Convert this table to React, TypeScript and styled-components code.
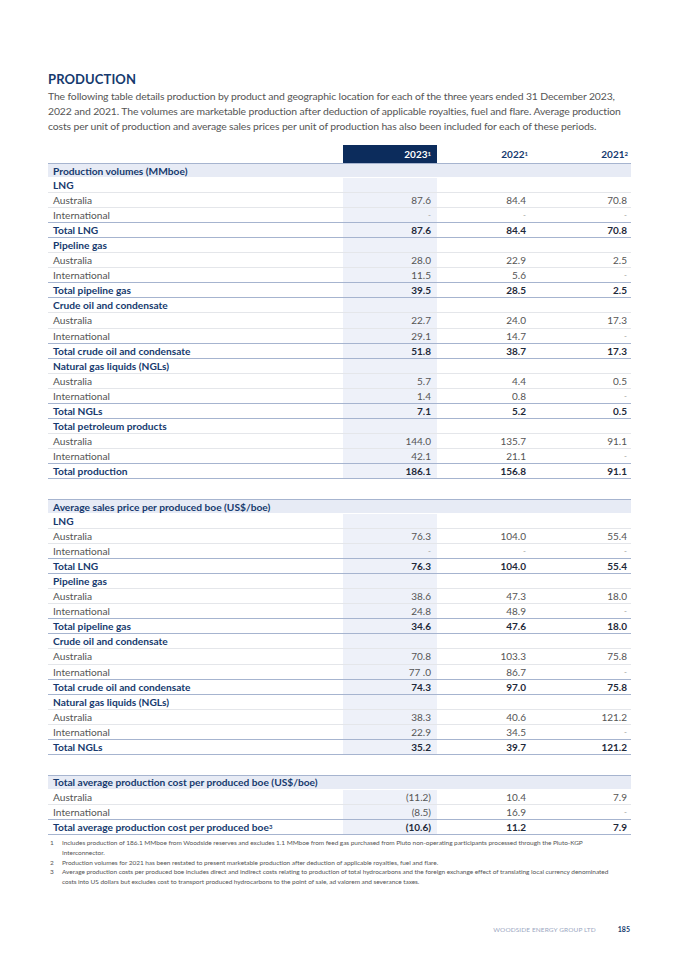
import React from "react";
import styled, { createGlobalStyle } from "styled-components";

const Global = createGlobalStyle`
  html, body { margin: 0; padding: 0; background: #fff; }
  body { font-family: Lato, "Liberation Sans", sans-serif; }
`;

const NAVY = "#163a6e";
const DARK = "#0c2c5c";
const SHADE = "#eef1f9";
const SECTION = "#e7ebf5";
const BLUE_LINE = "#a6b4cf";
const GRAY_LINE = "#e4e6ea";
const TEXT = "#555";

const Page = styled.div`
  width: 679px;
  min-height: 960px;
  box-sizing: border-box;
  padding: 71px 48px 24px 48px;
  display: flex;
  flex-direction: column;
`;

const Title = styled.h1`
  margin: 0;
  font-size: 13px;
  line-height: 16px;
  font-weight: 700;
  color: ${NAVY};
  letter-spacing: 0.1px;
`;

const Intro = styled.p`
  margin: 2px 0 11px 0;
  font-size: 10.4px;
  line-height: 15px;
  color: ${TEXT};
  font-weight: 400;
  letter-spacing: -0.12px;
`;

const Table = styled.div`
  display: flex;
  flex-direction: column;
`;

const cols = "295px 94px 94px 100px";

const HeadRow = styled.div`
  display: grid;
  grid-template-columns: ${cols};
  height: 18px;
`;

const HeadCell = styled.div<{ $dark?: boolean; $pad: number }>`
  display: flex;
  align-items: center;
  justify-content: flex-end;
  padding-right: ${(p) => p.$pad}px;
  font-size: 10px;
  font-weight: 700;
  color: ${(p) => (p.$dark ? "#fff" : NAVY)};
  background: ${(p) => (p.$dark ? DARK : "transparent")};
`;

const Sup = styled.sup`
  font-size: 6px;
  line-height: 0;
  vertical-align: 4px;
  margin-left: 0;
`;

type Kind = "section" | "sub" | "item" | "total";

const Row = styled.div<{ $kind: Kind; $blueBottom: boolean; $gap?: boolean }>`
  display: grid;
  grid-template-columns: ${cols};
  height: 15.06px;
  box-sizing: border-box;
  margin-top: ${(p) => (p.$gap ? "20px" : "0")};
  background: ${(p) => (p.$kind === "section" ? SECTION : "transparent")};
  border-top: ${(p) => (p.$kind === "section" ? `1px solid ${BLUE_LINE}` : "none")};
  border-bottom: 1px solid
    ${(p) => (p.$blueBottom ? BLUE_LINE : p.$kind === "section" ? "#fff" : GRAY_LINE)};
`;

const Label = styled.div<{ $kind: Kind }>`
  display: flex;
  align-items: center;
  padding-left: 5px;
  font-size: 10.2px;
  white-space: nowrap;
  font-weight: ${(p) => (p.$kind === "item" ? 400 : 700)};
  color: ${(p) => (p.$kind === "item" ? TEXT : NAVY)};
`;

const Value = styled.div<{ $kind: Kind; $shade?: boolean; $pad: number }>`
  display: flex;
  align-items: center;
  justify-content: flex-end;
  padding-right: ${(p) => p.$pad}px;
  font-size: 10px;
  font-weight: ${(p) => (p.$kind === "total" ? 700 : 400)};
  color: ${(p) => (p.$kind === "total" ? "#1f2a3a" : TEXT)};
  background: ${(p) => (p.$shade && p.$kind !== "section" ? SHADE : "transparent")};
`;

const Dash = styled.span`
  color: #9a9a9a;
  font-size: 8px;
`;

const Notes = styled.ol`
  list-style: none;
  margin: 3px 0 0 0;
  padding: 0 0 0 2px;
  display: flex;
  flex-direction: column;
`;

const Note = styled.li`
  display: flex;
  font-size: 6.5px;
  line-height: 9.8px;
  color: ${TEXT};
`;

const NoteNum = styled.span`
  flex: 0 0 12px;
`;

const NoteText = styled.span`
  flex: 1;
  padding-right: 10px;
  letter-spacing: -0.05px;
`;

const Footer = styled.div`
  margin-top: auto;
  padding-bottom: 3px;
  display: flex;
  justify-content: flex-end;
  align-items: center;
  gap: 22px;
  padding-right: 1px;
`;

const FooterName = styled.span`
  font-size: 6.5px;
  color: #9ba7c2;
  letter-spacing: 0.1px;
`;

const PageNum = styled.span`
  font-size: 7px;
  font-weight: 700;
  color: ${NAVY};
`;

type R = { k: Kind; l: string; v?: [string, string, string]; sup?: string; gap?: boolean };

const sub = (l: string): R => ({ k: "sub", l });
const item = (l: string, a: string, b: string, c: string): R => ({ k: "item", l, v: [a, b, c] });
const total = (l: string, a: string, b: string, c: string, sup?: string): R => ({
  k: "total",
  l,
  v: [a, b, c],
  sup,
});

const rows: R[] = [
  { k: "section", l: "Production volumes (MMboe)" },
  sub("LNG"),
  item("Australia", "87.6", "84.4", "70.8"),
  item("International", "-", "-", "-"),
  total("Total LNG", "87.6", "84.4", "70.8"),
  sub("Pipeline gas"),
  item("Australia", "28.0", "22.9", "2.5"),
  item("International", "11.5", "5.6", "-"),
  total("Total pipeline gas", "39.5", "28.5", "2.5"),
  sub("Crude oil and condensate"),
  item("Australia", "22.7", "24.0", "17.3"),
  item("International", "29.1", "14.7", "-"),
  total("Total crude oil and condensate", "51.8", "38.7", "17.3"),
  sub("Natural gas liquids (NGLs)"),
  item("Australia", "5.7", "4.4", "0.5"),
  item("International", "1.4", "0.8", "-"),
  total("Total NGLs", "7.1", "5.2", "0.5"),
  sub("Total petroleum products"),
  item("Australia", "144.0", "135.7", "91.1"),
  item("International", "42.1", "21.1", "-"),
  total("Total production", "186.1", "156.8", "91.1"),
  { k: "section", l: "Average sales price per produced boe (US$/boe)", gap: true },
  sub("LNG"),
  item("Australia", "76.3", "104.0", "55.4"),
  item("International", "-", "-", "-"),
  total("Total LNG", "76.3", "104.0", "55.4"),
  sub("Pipeline gas"),
  item("Australia", "38.6", "47.3", "18.0"),
  item("International", "24.8", "48.9", "-"),
  total("Total pipeline gas", "34.6", "47.6", "18.0"),
  sub("Crude oil and condensate"),
  item("Australia", "70.8", "103.3", "75.8"),
  item("International", "77 .0", "86.7", "-"),
  total("Total crude oil and condensate", "74.3", "97.0", "75.8"),
  sub("Natural gas liquids (NGLs)"),
  item("Australia", "38.3", "40.6", "121.2"),
  item("International", "22.9", "34.5", "-"),
  total("Total NGLs", "35.2", "39.7", "121.2"),
  { k: "section", l: "Total average production cost per produced boe (US$/boe)", gap: true },
  item("Australia", "(11.2)", "10.4", "7.9"),
  item("International", "(8.5)", "16.9", "-"),
  total("Total average production cost per produced boe", "(10.6)", "11.2", "7.9", "3"),
];

const pads = [6, 5, 4];

const notes = [
  "Includes production of 186.1 MMboe from Woodside reserves and excludes 1.1 MMboe from feed gas purchased from Pluto non-operating participants processed through the Pluto-KGP Interconnector.",
  "Production volumes for 2021 has been restated to present marketable production after deduction of applicable royalties, fuel and flare.",
  "Average production costs per produced boe includes direct and indirect costs relating to production of total hydrocarbons and the foreign exchange effect of translating local currency denominated costs into US dollars but excludes cost to transport produced hydrocarbons to the point of sale, ad valorem and severance taxes.",
];

export default function App() {
  return (
    <>
      <Global />
      <Page>
        <Title>PRODUCTION</Title>
        <Intro>
          The following table details production by product and geographic location for each of the three years ended 31
          December 2023, 2022 and 2021. The volumes are marketable production after deduction of applicable royalties,
          fuel and flare. Average production costs per unit of production and average sales prices per unit of
          production has also been included for each of these periods.
        </Intro>
        <Table>
          <HeadRow>
            <div />
            <HeadCell $dark $pad={6}>
              2023<Sup>1</Sup>
            </HeadCell>
            <HeadCell $pad={3}>
              2022<Sup>1</Sup>
            </HeadCell>
            <HeadCell $pad={3}>
              2021<Sup>2</Sup>
            </HeadCell>
          </HeadRow>
          {rows.map((r, i) => {
            const next = rows[i + 1];
            const blueBottom = r.k === "total" || (next !== undefined && next.k === "total");
            return (
              <Row key={i} $kind={r.k} $blueBottom={blueBottom} $gap={r.gap}>
                <Label $kind={r.k}>
                  {r.l}
                  {r.sup && <Sup>{r.sup}</Sup>}
                </Label>
                {[0, 1, 2].map((c) => {
                  const v = r.v ? r.v[c] : "";
                  return (
                    <Value key={c} $kind={r.k} $shade={c === 0} $pad={pads[c]}>
                      {v === "-" ? <Dash>-</Dash> : v}
                    </Value>
                  );
                })}
              </Row>
            );
          })}
        </Table>
        <Notes>
          {notes.map((n, i) => (
            <Note key={i}>
              <NoteNum>{i + 1}</NoteNum>
              <NoteText>{n}</NoteText>
            </Note>
          ))}
        </Notes>
        <Footer>
          <FooterName>WOODSIDE ENERGY GROUP LTD</FooterName>
          <PageNum>185</PageNum>
        </Footer>
      </Page>
    </>
  );
}
